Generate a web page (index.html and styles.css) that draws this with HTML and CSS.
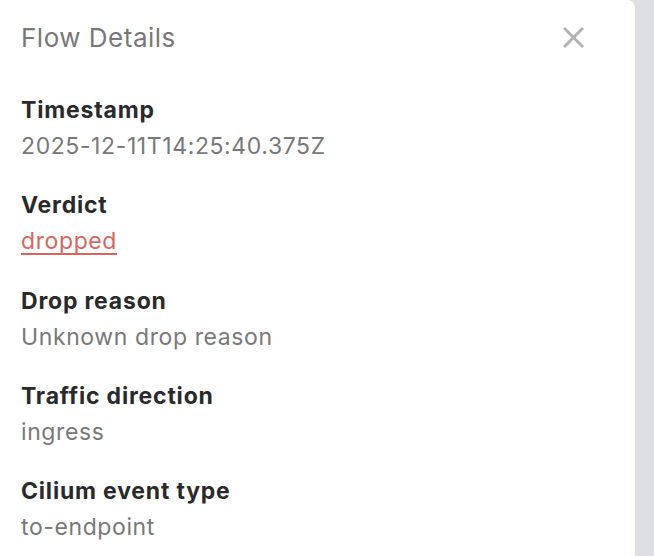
FILE: index.html
```html
<!DOCTYPE html>
<html lang="en">
<head>
<meta charset="utf-8">
<title>Flow Details</title>
<link rel="stylesheet" href="styles.css">
</head>
<body>
<div class="panel">
  <div class="header">
    <h2 class="title">Flow Details</h2>
    <button class="close" aria-label="Close">
      <svg width="21" height="21" viewBox="0 0 21 21"><path d="M1 1 L20 20 M20 1 L1 20" stroke="currentColor" stroke-width="3"/></svg>
    </button>
  </div>
  <dl class="fields">
    <div class="field"><dt>Timestamp</dt><dd>2025-12-11T14:25:40.375Z</dd></div>
    <div class="field"><dt>Verdict</dt><dd><a class="verdict" href="#">dropped</a></dd></div>
    <div class="field"><dt>Drop reason</dt><dd>Unknown drop reason</dd></div>
    <div class="field"><dt>Traffic direction</dt><dd>ingress</dd></div>
    <div class="field"><dt>Cilium event type</dt><dd>to-endpoint</dd></div>
  </dl>
</div>
</body>
</html>
```
FILE: styles.css
```css
html, body {
  margin: 0;
  height: 100%;
}
body {
  background: #dcdfe4;
  font-family: Inter, "Noto Sans", sans-serif;
  overflow: hidden;
}
.panel {
  width: 635px;
  height: 100%;
  background: #fff;
  border-top-right-radius: 8px;
  box-sizing: border-box;
  padding: 22px 51px 0 21px;
}
.header {
  display: flex;
  justify-content: space-between;
  align-items: center;
  height: 32px;
}
.title {
  margin: 0;
  font-size: 26px;
  font-weight: 400;
  letter-spacing: 0.5px;
  color: #787878;
  line-height: 32px;
}
.close {
  border: 0;
  background: none;
  padding: 0;
  margin-top: -2px;
  color: #b3b3b3;
  width: 21px;
  height: 21px;
  display: flex;
}
.fields {
  margin: 40px 0 0;
  display: flex;
  flex-direction: column;
  gap: 27.3px;
}
.field dt {
  font-size: 23px;
  font-weight: 700;
  letter-spacing: 0.8px;
  color: #2a2a2a;
  line-height: 32px;
}
.field dd {
  margin: 4px 0 0;
  font-size: 23px;
  letter-spacing: 0.6px;
  color: #787878;
  line-height: 32px;
}
.verdict {
  color: #d8655d;
  text-decoration: underline;
  text-decoration-thickness: 1.5px;
  text-underline-offset: 4px;
}
```
